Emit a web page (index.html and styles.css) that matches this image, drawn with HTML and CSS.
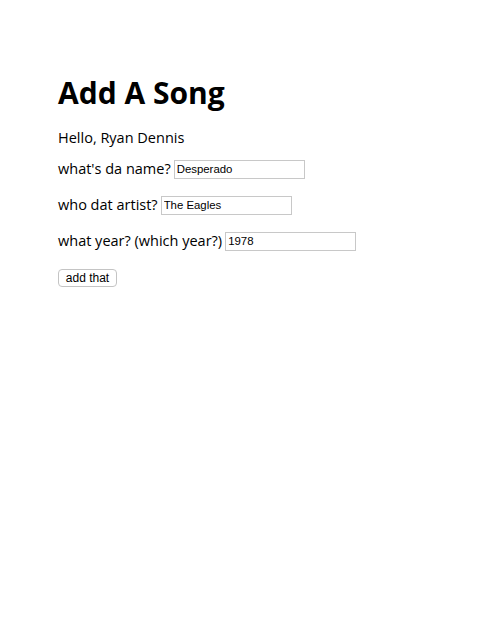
FILE: index.html
```html
<!DOCTYPE html>
<html>
<head>
<meta charset="utf-8">
<link rel="stylesheet" href="styles.css">
</head>
<body>
<div class="page">
  <h1 class="title">Add A Song</h1>
  <p class="hello">Hello, Ryan Dennis</p>
  <form class="song-form">
    <div class="row"><label class="label">what's da name?</label><input class="field" type="text" value="Desperado"></div>
    <div class="row"><label class="label">who dat artist?</label><input class="field" type="text" value="The Eagles"></div>
    <div class="row"><label class="label">what year? (which year?)</label><input class="field" type="text" value="1978"></div>
    <div class="actions"><button class="btn" type="button">add that</button></div>
  </form>
</div>
</body>
</html>
```
FILE: styles.css
```css
html, body { margin: 0; padding: 0; background: #fff; }
.page {
  padding: 73px 58px 0 58px;
  font-family: "Open Sans", "DejaVu Sans", sans-serif;
  color: #000;
}
.title {
  margin: 0;
  font-size: 30px;
  line-height: 40px;
  font-weight: bold;
}
.hello {
  margin: 15px 0 0 0;
  font-size: 14.5px;
  line-height: 20px;
}
.song-form {
  margin: 11px 0 0 0;
  display: flex;
  flex-direction: column;
  gap: 16px;
}
.row {
  display: flex;
  align-items: center;
  gap: 3px;
  height: 20px;
}
.label {
  font-size: 14.5px;
  line-height: 20px;
}
.field {
  box-sizing: border-box;
  width: 131px;
  height: 19px;
  margin: 0;
  border: 1px solid #c8c8c8;
  padding: 1px 2px;
  font-family: "Liberation Sans", Arial, sans-serif;
  font-size: 11.4px;
  color: #000;
  background: #fff;
  outline: none;
}
.actions {
  display: flex;
  margin-top: 2px;
}
.btn {
  box-sizing: border-box;
  width: 59px;
  height: 18px;
  margin: 0;
  padding: 0;
  border: 1px solid #c4c4c4;
  border-radius: 4px;
  background: #fff;
  font-family: "Liberation Sans", Arial, sans-serif;
  font-size: 12px;
  color: #000;
}
```
